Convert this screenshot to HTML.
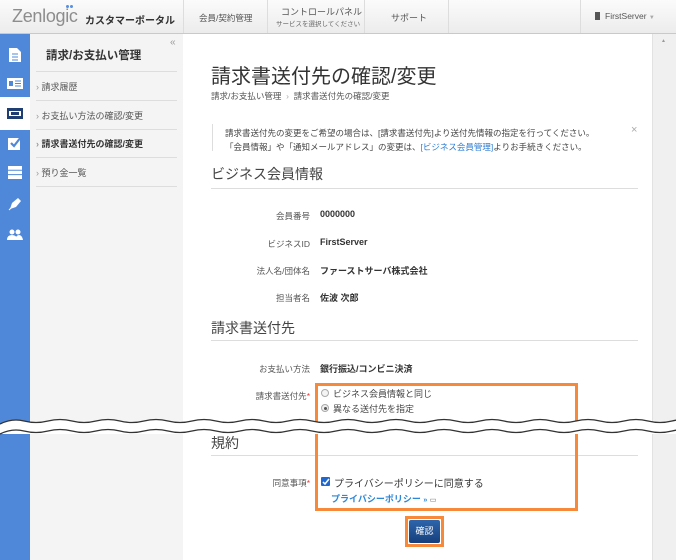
<!DOCTYPE html>
<html><head><meta charset="utf-8"><style>
*{margin:0;padding:0;box-sizing:border-box}
body{width:676px;height:560px;overflow:hidden;position:relative;background:#fff;font-family:"Liberation Sans","Noto Sans CJK JP",sans-serif;color:#333}
.a{position:absolute;white-space:nowrap}
#hd{position:absolute;left:0;top:0;width:676px;height:34px;background:linear-gradient(#fbfbfb,#ececec);border-bottom:1px solid #c9c9c9}
.sep{position:absolute;top:0;width:1px;height:33px;background:#ddd}
#ib{position:absolute;left:0;top:34px;width:30px;height:526px;background:#4f88d8}
#sb{position:absolute;left:30px;top:34px;width:153px;height:526px;background:#f4f4f4}
.hl{position:absolute;left:36px;width:141px;height:1px;background:#ddd}
.si{font-size:9px;color:#555;left:37px}
.lbl{font-size:8.5px;color:#555;text-align:right;width:120px;left:190px}
.val{font-size:9px;font-weight:bold;left:320px}
.h2{font-size:14px;color:#444;left:211px}
.ln{position:absolute;left:211px;width:427px;height:1px;background:#ddd}
</style></head><body>
<div id="hd">
 <div class="a" style="left:12px;top:6px;font-size:18px;color:#8d8d8d;letter-spacing:-0.3px">Zenlogic</div>
 <div class="a" style="left:66px;top:5px;width:3px;height:3px;border-radius:2px;background:#5a8ee0"></div>
 <div class="a" style="left:70px;top:5px;width:3px;height:3px;border-radius:2px;background:#5a8ee0"></div>
 <div class="a" style="left:85px;top:12px;font-size:10px;font-weight:bold;color:#333">カスタマーポータル</div>
 <div class="sep" style="left:183px"></div>
 <div class="a" style="left:199px;top:12px;font-size:8.5px;color:#555">会員/契約管理</div>
 <div class="sep" style="left:267px"></div>
 <div class="a" style="left:281px;top:5px;font-size:9px;color:#555">コントロールパネル</div>
 <div class="a" style="left:276px;top:18px;font-size:6.5px;color:#666">サービスを選択してください</div>
 <div class="sep" style="left:364px"></div>
 <div class="a" style="left:391px;top:11px;font-size:9px;color:#555">サポート</div>
 <div class="sep" style="left:448px"></div>
 <div class="sep" style="left:580px"></div>
 <div class="a" style="left:595px;top:12px;width:5px;height:8px;background:#555"></div>
 <div class="a" style="left:605px;top:11px;font-size:8.5px;color:#555">FirstServer <span style="color:#aaa;font-size:6px">▼</span></div>
</div>
<div id="ib">
 <div class="a" style="left:0;top:63px;width:30px;height:33px;background:#fff"></div>
 <svg class="a" style="left:8px;top:13px" width="14" height="16"><path d="M1 1h8l4 4v10H1z" fill="#fff"/><path d="M4 7h6M4 10h6M4 13h6" stroke="#4f88d8"/></svg>
 <svg class="a" style="left:7px;top:44px" width="16" height="11"><rect width="16" height="11" fill="#fff"/><rect x="2" y="3" width="4" height="5" fill="#4f88d8"/><path d="M8 3h6M8 5.5h6M8 8h6" stroke="#4f88d8"/></svg>
 <svg class="a" style="left:7px;top:74px" width="16" height="11"><rect width="16" height="11" fill="#1f3f73"/><rect x="2" y="3" width="12" height="5" fill="#fff"/><rect x="4" y="4" width="8" height="3" fill="#1f3f73"/></svg>
 <svg class="a" style="left:8px;top:102px" width="15" height="14"><rect y="2" width="12" height="12" fill="#fff"/><path d="M3 7l3 3 7-9" stroke="#4f88d8" stroke-width="2.2" fill="none"/></svg>
 <svg class="a" style="left:8px;top:132px" width="14" height="13"><rect width="14" height="13" fill="#fff"/><path d="M0 4.3h14M0 8.6h14" stroke="#4f88d8"/></svg>
 <svg class="a" style="left:8px;top:163px" width="14" height="14"><path d="M2 12l2-6 6-5 3 3-5 6z" fill="#fff"/><path d="M1 13l3-3" stroke="#fff"/></svg>
 <svg class="a" style="left:7px;top:195px" width="16" height="11"><circle cx="5" cy="3" r="2.5" fill="#fff"/><circle cx="11" cy="3" r="2.5" fill="#fff"/><path d="M0 11q0-5 5-5t5 5zM8 11q1-5 4-5t4 5z" fill="#fff"/></svg>
</div>
<div id="sb">
 <div class="a" style="left:16px;top:13px;font-size:11.5px;font-weight:bold;color:#333">請求/お支払い管理</div>
 <div class="a" style="left:140px;top:3px;font-size:10px;color:#999">«</div>
 <div class="hl" style="top:37px;left:6px"></div>
 <div class="a si" style="left:6px;top:46px"><span style="color:#999">›</span> 請求履歴</div>
 <div class="hl" style="top:66px;left:6px"></div>
 <div class="a si" style="left:6px;top:75px"><span style="color:#999">›</span> お支払い方法の確認/変更</div>
 <div class="hl" style="top:95px;left:6px"></div>
 <div class="a si" style="left:6px;top:103px;color:#333;font-weight:bold"><span style="color:#999">›</span> 請求書送付先の確認/変更</div>
 <div class="hl" style="top:123px;left:6px"></div>
 <div class="a si" style="left:6px;top:132px"><span style="color:#999">›</span> 預り金一覧</div>
 <div class="hl" style="top:152px;left:6px"></div>
</div>
<div class="a" style="left:652px;top:34px;width:24px;height:526px;background:#f0f0f0;border-left:1px solid #e2e2e2"></div>
<div class="a" style="left:661px;top:38px;font-size:5px;color:#999">▲</div>

<div class="a" style="left:211px;top:60px;font-size:20px;color:#333">請求書送付先の確認/変更</div>
<div class="a" style="left:211px;top:90px;font-size:8.5px;color:#555">請求/お支払い管理 <span style="color:#aaa">&nbsp;›&nbsp;</span> 請求書送付先の確認/変更</div>
<div class="a" style="left:212px;top:124px;width:1px;height:27px;background:#ddd"></div>
<div class="a" style="left:225px;top:126px;font-size:8.5px;color:#444;line-height:14px">請求書送付先の変更をご希望の場合は、[請求書送付先]より送付先情報の指定を行ってください。<br>「会員情報」や「通知メールアドレス」の変更は、<span style="color:#2d7dd2">[ビジネス会員管理]</span>よりお手続きください。</div>
<div class="a" style="left:631px;top:124px;font-size:11px;color:#aaa">×</div>

<div class="a h2" style="top:164px">ビジネス会員情報</div>
<div class="ln" style="top:188px"></div>
<div class="a lbl" style="top:210px">会員番号</div><div class="a val" style="top:209px">0000000</div>
<div class="a lbl" style="top:238px">ビジネスID</div><div class="a val" style="top:237px">FirstServer</div>
<div class="a lbl" style="top:265px">法人名/団体名</div><div class="a val" style="top:264px">ファーストサーバ株式会社</div>
<div class="a lbl" style="top:292px">担当者名</div><div class="a val" style="top:291px">佐波 次郎</div>
<div class="a h2" style="top:318px">請求書送付先</div>
<div class="ln" style="top:340px"></div>
<div class="a lbl" style="top:363px">お支払い方法</div><div class="a val" style="top:362px">銀行振込/コンビニ決済</div>
<div class="a lbl" style="top:390px">請求書送付先<span style="color:#e33">*</span></div>
<div class="a" style="left:321px;top:389px;width:8px;height:8px;border:1px solid #aaa;border-radius:50%;background:#f4f4f4"></div>
<div class="a" style="left:333px;top:387px;font-size:9px;color:#444">ビジネス会員情報と同じ</div>
<div class="a" style="left:321px;top:404px;width:8px;height:8px;border:1px solid #aaa;border-radius:50%;background:#eee"><div style="margin:1.5px;width:3px;height:3px;border-radius:50%;background:#555"></div></div>
<div class="a" style="left:333px;top:402px;font-size:9px;color:#444">異なる送付先を指定</div>

<div class="a h2" style="top:433px">規約</div>
<div class="ln" style="top:455px"></div>
<div class="a lbl" style="top:477px">同意事項<span style="color:#e33">*</span></div>
<div class="a" style="left:321px;top:477px;width:9px;height:9px;background:#2167d0;border-radius:1px"></div>
<svg class="a" style="left:322px;top:478px" width="8" height="8"><path d="M1 4l2 2 4-5" stroke="#fff" stroke-width="1.5" fill="none"/></svg>
<div class="a" style="left:334px;top:475px;font-size:10px;color:#333">プライバシーポリシーに同意する</div>
<div class="a" style="left:331px;top:492px;font-size:9px;font-weight:bold;color:#2d87d8">プライバシーポリシー <span style="font-size:7px">»</span> <span style="color:#666;font-weight:normal;font-size:7px">▭</span></div>

<div class="a" style="left:315px;top:383px;width:263px;height:128px;border:3px solid #f6893a"></div>
<div class="a" style="left:405px;top:516px;width:39px;height:31px;border:3px solid #f6893a"></div>
<div class="a" style="left:409px;top:520px;width:31px;height:23px;background:linear-gradient(#2e65ab,#173f7c);border-radius:2px;color:#fff;font-size:9px;text-align:center;line-height:23px">確認</div>

<svg class="a" style="left:0;top:410px" width="676" height="30">
 <path d="M0 14 Q12 8 24 11 T48 11 T72 11 T96 11 T120 11 T144 11 T168 11 T192 11 T216 11 T240 11 T264 11 T288 11 T312 11 T336 11 T360 11 T384 11 T408 11 T432 11 T456 11 T480 11 T504 11 T528 11 T552 11 T576 11 T600 11 T624 11 T648 11 T672 11 T696 11 L696 24 L0 24 Z" fill="#fff"/>
 <path d="M0 14 Q12 8 24 11 T48 11 T72 11 T96 11 T120 11 T144 11 T168 11 T192 11 T216 11 T240 11 T264 11 T288 11 T312 11 T336 11 T360 11 T384 11 T408 11 T432 11 T456 11 T480 11 T504 11 T528 11 T552 11 T576 11 T600 11 T624 11 T648 11 T672 11 T696 11" stroke="#333" stroke-width="1.3" fill="none"/>
 <path d="M0 24 Q12 18 24 21 T48 21 T72 21 T96 21 T120 21 T144 21 T168 21 T192 21 T216 21 T240 21 T264 21 T288 21 T312 21 T336 21 T360 21 T384 21 T408 21 T432 21 T456 21 T480 21 T504 21 T528 21 T552 21 T576 21 T600 21 T624 21 T648 21 T672 21 T696 21" stroke="#333" stroke-width="1.3" fill="none"/>
</svg>
</body></html>
